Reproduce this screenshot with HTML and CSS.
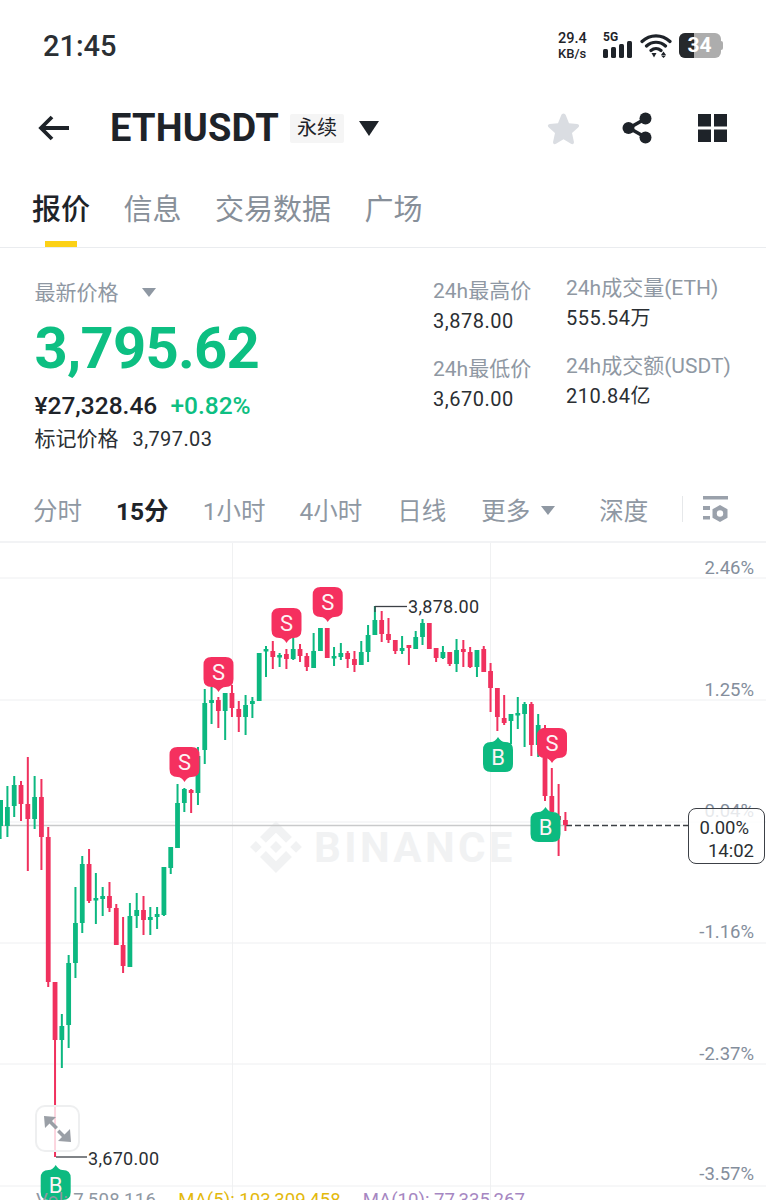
FILE: index.html
```html
<!DOCTYPE html>
<html>
<head>
    <meta charset="UTF-8">
    <title>ETHUSDT 永续</title>
    <link rel="stylesheet" href="styles.css">
</head>
<body>
    <div class="statusbar">
        <span class="clock">21:45</span>
        <div class="status-icons">
            <div class="netspeed"><span>29.4</span><span class="unit">KB/s</span></div>
            <div class="signal">
                <span class="five-g">5G</span>
                <svg width="29" height="17" viewBox="0 0 29 17"><rect x="0" y="8" width="5" height="9" rx="1.5"/><rect x="8" y="6" width="5" height="11" rx="1.5"/><rect x="16" y="3" width="5" height="14" rx="1.5"/><rect x="24" y="0" width="5" height="17" rx="1.5"/></svg>
            </div>
            <svg class="wifi" width="32" height="25" viewBox="0 0 32 25"><path d="M2 8.5C10 1 22 1 30 8.5M6.5 13C12 8 20 8 25.5 13M11 17.5C14 15 18 15 21 17.5" fill="none" stroke="#1e2329" stroke-width="3.2" stroke-linecap="round"/><path d="M11.5 20h5l-2.500 4.500zM21 22h5l-2.500-3.500zM21 22.500h5l-2.500 2.500z" fill="#1e2329"/></svg>
            <div class="battery"><span class="battery-level"></span><span class="battery-text">34</span></div>
        </div>
    </div>

    <div class="topbar">
        <svg class="back" width="32" height="26" viewBox="0 0 32 26"><path d="M31 13H3M14 2 3 13l11 11" fill="none" stroke="#1e2329" stroke-width="3.800"/></svg>
        <span class="symbol">ETHUSDT</span>
        <span class="chip">永续</span>
        <span class="tri tri-big"></span>
        <div class="topbar-actions">
            <svg width="33" height="33" viewBox="0 0 33 33"><path d="M16.500 1.500c1 0 1.800.700 2.300 1.800l3.200 8 8.200.700c2 .2 2.600 2 1.200 3.300l-6.400 5.800 1.900 8.700c.4 2-1.200 3-2.900 2l-7.500-4.500-7.500 4.500c-1.700 1-3.300 0-2.900-2l1.900-8.700L1.600 15.300C.2 14 .8 12.200 2.800 12l8.200-.7 3.200-8c.5-1.100 1.300-1.800 2.300-1.800z" fill="#dadde2"/></svg>
            <svg width="30" height="32" viewBox="0 0 30 32"><path d="M23 7 7 16l16 9" fill="none" stroke="#1e2329" stroke-width="3.500"/><circle cx="23.500" cy="6.500" r="6" fill="#1e2329"/><circle cx="6.500" cy="16" r="6" fill="#1e2329"/><circle cx="23.500" cy="25.500" r="6" fill="#1e2329"/></svg>
            <svg class="layout-icon" width="29" height="28" viewBox="0 0 29 28" fill="#1e2329"><rect width="13" height="12.500"/><rect x="16" width="13" height="12.500"/><rect y="15.500" width="13" height="12.500"/><rect x="16" y="15.500" width="13" height="12.500"/></svg>
        </div>
    </div>

    <div class="tabs">
        <div class="tab active">报价<i class="tab-mark"></i></div>
        <div class="tab">信息</div>
        <div class="tab">交易数据</div>
        <div class="tab">广场</div>
    </div>

    <div class="stats">
        <div class="price-block">
            <div class="price-label">最新价格 <span class="tri tri-small"></span></div>
            <div class="price">3,795.62</div>
            <div class="cny">¥27,328.46 <span class="change">+0.82%</span></div>
            <div class="mark"><span>标记价格</span><span class="mark-value">3,797.03</span></div>
        </div>
        <div class="stat-col stat-col-a">
            <div class="stat"><div class="stat-label">24h最高价</div><div class="stat-value">3,878.00</div></div>
            <div class="stat"><div class="stat-label">24h最低价</div><div class="stat-value">3,670.00</div></div>
        </div>
        <div class="stat-col stat-col-b">
            <div class="stat"><div class="stat-label">24h成交量(ETH)</div><div class="stat-value">555.54万</div></div>
            <div class="stat"><div class="stat-label">24h成交额(USDT)</div><div class="stat-value">210.84亿</div></div>
        </div>
    </div>

    <div class="intervals">
        <span>分时</span>
        <span class="current">15分</span>
        <span>1小时</span>
        <span>4小时</span>
        <span class="daily">日线</span>
        <span class="more">更多<i class="tri tri-small"></i></span>
        <span class="depth">深度</span>
        <i class="divider"></i>
        <svg class="chart-settings" width="25" height="26" viewBox="0 0 25 26" fill="#9aa1ab"><rect width="25" height="3.500"/><rect y="10" width="7" height="4"/><rect y="20" width="7" height="3.500"/><path d="M17 9l7.500 4.200v8.600L17 26l-7.500-4.200v-8.600z"/><circle cx="17" cy="17.500" r="3.200" fill="#fff"/></svg>
    </div>

    <div class="chart">
        <svg id="chart" width="766" height="657" viewBox="0 543 766 657"></svg>
        <div class="last-tag"><span>0.00%</span><span class="countdown">14:02</span></div>
        <div class="expand">
            <svg width="45" height="47" viewBox="0 0 45 47"><path d="M9 11l12 1-4 4 6 6-2.500 2.500-6-6-4.500 4.500z" fill="#9a9fa6"/><path d="M36 37l-13-1 4-4-5-5 2.500-2.500 5 5 5.500-5.500z" fill="#9a9fa6"/></svg>
        </div>
        <div class="legend">
            <span class="legend-vol">Vol: 7,508,116</span>
            <span class="legend-ma5">MA(5): 103,309,458</span>
            <span class="legend-ma10">MA(10): 77,335,267</span>
        </div>
    </div>

    <script src="chart.js"></script>
</body>
</html>
```

FILE: styles.css
```css
* { box-sizing: border-box; }
html, body { margin: 0; padding: 0; }
body { width: 766px; height: 1200px; overflow: hidden; background: #fff; color: #1e2329; font-family: Roboto, "Noto Sans CJK SC", sans-serif; }

.tri { display: inline-block; width: 0; height: 0; border-style: solid; border-color: #1e2329 transparent transparent transparent; }
.tri-big { border-width: 15px 10.500px 0 10.500px; margin-left: 15px; }
.tri-small { border-width: 9px 7.500px 0 7.500px; border-top-color: #8f98a3; }

.statusbar { height: 90px; padding-left: 43px; padding-right: 43px; display: flex; align-items: center; justify-content: space-between; }
.clock { margin-top: 2px; font-size: 29px; font-weight: 500; color: #2b2f33; }
.status-icons { display: flex; align-items: flex-end; height: 25px; }
.netspeed { display: flex; flex-direction: column; width: 45px; margin-bottom: -3px; font-size: 14.500px; font-weight: 500; line-height: 16px; }
.netspeed .unit { font-size: 13px; line-height: 14px; }
.signal { position: relative; width: 29px; height: 17px; }
.signal svg { display: block; fill: #1e2329; }
.five-g { position: absolute; left: 0; top: -10px; font-size: 12px; font-weight: 700; line-height: 12px; }
.wifi { margin-left: 8px; }
.battery { position: relative; width: 42px; height: 25px; margin-left: 7px; margin-right: 2px; border-radius: 6px; background: #adadad; text-align: center; }
.battery::after { content: ""; position: absolute; right: -2px; top: 8px; width: 2px; height: 9px; border-radius: 0 2px 2px 0; background: #adadad; }
.battery-level { position: absolute; left: 0; top: 0; width: 15px; height: 100%; border-radius: 6px 0 0 6px; background: #26292c; }
.battery-text { position: relative; font-size: 21px; font-weight: 700; line-height: 25px; color: #fff; margin-right: 1px; }

.topbar { height: 76px; padding-left: 38px; padding-right: 39px; display: flex; align-items: center; }
.symbol { margin-left: 40px; font-size: 38px; font-weight: 700; letter-spacing: 0.2px; }
.chip { margin-left: 11px; width: 54px; height: 29px; background: #f5f5f5; border-radius: 2px; font-size: 20px; line-height: 29px; text-align: center; }
.topbar-actions { margin-left: auto; display: flex; align-items: center; gap: 42px; }
.layout-icon { margin-left: 4px; }

.tabs { position: relative; height: 82px; padding-left: 32px; padding-top: 24px; display: flex; gap: 33.500px; border-bottom: 1px solid #eaecef; }
.tab { position: relative; height: 40px; font-size: 29px; line-height: 40px; color: #878f99; }
.tab.active { color: #1e2329; font-weight: 500; }
.tab-mark { position: absolute; left: 13px; top: 51px; width: 32px; height: 6px; background: #fcd116; }

.stats { height: 232px; display: flex; }
.price-block { width: 433px; padding-left: 34.500px; padding-top: 30px; }
.price-label { font-size: 21px; line-height: 30px; color: #8f98a3; }
.price-label .tri { margin-left: 18px; vertical-align: 3px; }
.price { margin-top: 8px; font-size: 58px; font-weight: 700; line-height: 64px; letter-spacing: -0.8px; color: #0dbf82; }
.cny { margin-top: 11px; font-size: 24.500px; font-weight: 500; line-height: 30px; white-space: nowrap; }
.change { margin-left: 7px; color: #0dbf82; }
.mark { margin-top: 5px; font-size: 21px; line-height: 26px; color: #2b2f33; }
.mark-value { margin-left: 14px; font-size: 20px; letter-spacing: 0.4px; }
.stat-col { display: flex; flex-direction: column; gap: 21px; }
.stat-col-a { width: 133px; padding-top: 29px; }
.stat-col-b { padding-top: 26px; }
.stat-label { font-size: 21px; line-height: 28px; color: #8f98a3; white-space: nowrap; }
.stat-value { margin-top: 3px; font-size: 20px; line-height: 26px; letter-spacing: 0.5px; color: #2b2f33; white-space: nowrap; }

.intervals { position: relative; height: 63px; padding-left: 33px; padding-bottom: 3px; display: flex; align-items: center; gap: 34px; font-size: 24.500px; color: #8f98a3; border-bottom: 2px solid #f2f3f5; }
.intervals .current { color: #1e2329; font-weight: 700; }
.intervals .daily { margin-left: 1px; }
.more { margin-left: 1px; }
.more .tri { margin-left: 11px; vertical-align: 5px; }
.depth { margin-left: 10px; }
.divider { width: 1px; height: 26px; background: #e6e8ea; }
.chart-settings { margin-left: -14px; }

.chart { position: relative; height: 657px; overflow: hidden; }
.chart svg { display: block; }
.last-tag { position: absolute; left: 688px; top: 265px; width: 77px; height: 56px; padding: 8px 10px 0 0; display: flex; flex-direction: column; align-items: flex-end; border: 1.500px solid #3c4046; border-radius: 8px; background: rgba(255, 255, 255, 0.8); font-size: 18.500px; line-height: 23px; color: #2b2f33; }
.last-tag span:first-child { margin-right: 5px; }
.expand { position: absolute; left: 35px; top: 562px; width: 45px; height: 47px; border: 2px solid #eeeff0; border-radius: 10px; background: rgba(255, 255, 255, 0.8); }
.expand svg { margin: -2px; }
.legend { position: absolute; left: 36px; top: 646px; display: flex; gap: 22px; font-size: 18.600px; line-height: 22px; white-space: nowrap; }
.legend-vol { color: #8f98a3; letter-spacing: 0.3px; }
.legend-ma5 { color: #e3b90d; }
.legend-ma10 { color: #a687c2; }
```

FILE: chart.js
```js
// свечи: [цвет, high, верх тела, низ тела, low], шаг по x постоянный
var candles = [
    ['g',800,800,826,839],['g',786,807,826,837],['g',776,785,806,817],['r',781,785,804,821],
    ['r',757,804,819,871],['g',776,797,819,829],['r',779,797,837,870],['r',827,837,982,987],
    ['r',982,982,1040,1157],['g',1014,1026,1040,1068],['g',955,963,1025,1048],['g',887,923,963,978],
    ['g',856,864,923,933],['r',849,864,901,903],['g',873,898,900,924],['g',887,896,899,916],
    ['r',882,896,908,912],['r',904,908,945,945],['r',917,945,966,973],['g',903,916,967,967],
    ['g',893,910,916,928],['r',896,910,920,935],['g',907,917,920,935],['g',907,914,917,929],
    ['g',867,867,915,916],['g',847,847,868,874],['g',784,803,848,848],['g',788,789,803,812],
    ['r',789,790,793,813],['g',747,756,793,805],['g',689,703,750,764],['g',687,700,703,724],
    ['r',697,700,711,728],['g',693,693,711,740],['r',685,693,708,717],['r',701,709,717,732],
    ['g',695,705,717,735],['g',697,701,704,718],['g',653,653,701,701],['g',646,649,651,677],
    ['r',641,651,657,669],['g',653,655,657,667],['r',649,654,659,669],['g',637,649,659,660],
    ['r',644,649,656,662],['r',653,656,667,671],['g',633,651,668,668],['g',628,628,651,651],
    ['r',628,628,658,658],['g',647,656,658,666],['g',643,653,657,660],['r',651,653,659,668],
    ['r',651,659,665,672],['g',641,652,665,665],['g',625,635,652,662],['g',606,620,635,635],
    ['r',611,620,634,642],['r',618,634,640,643],['r',640,640,651,654],['g',636,648,651,654],
    ['r',645,645,648,665],['g',631,637,649,649],['g',619,623,637,645],['r',623,623,649,649],
    ['r',648,648,658,662],['g',646,652,658,659],['r',652,652,664,666],['g',639,650,664,672],
    ['r',640,649,652,667],['r',647,652,667,668],['g',650,650,667,677],['r',646,649,672,672],
    ['r',663,671,688,712],['r',688,688,717,731],['r',695,718,723,725],['g',714,714,721,744],
    ['g',697,713,715,729],['g',702,704,714,747],['r',702,704,745,756],['g',714,725,745,757],
    ['r',725,728,796,801],['r',768,796,812,820],['r',784,816,820,856],['r',812,820,825,831]
];
var COLORS = { g: '#0cb880', r: '#f0315e' };
var STEP = 6.805, X0 = 0.6;
var SVG = 'http://www.w3.org/2000/svg';
var svg = document.getElementById('chart');

function add(tag, attrs, text) {
    var el = document.createElementNS(SVG, tag);
    for (var k in attrs) el.setAttribute(k, attrs[k]);
    if (text) el.textContent = text;
    svg.appendChild(el);
    return el;
}

function line(x1, y1, x2, y2, color, width, dash) {
    var attrs = { x1: x1, y1: y1, x2: x2, y2: y2, stroke: color, 'stroke-width': width || 1 };
    if (dash) attrs['stroke-dasharray'] = dash;
    add('line', attrs);
}

// сетка и подписи оси
[232.5, 490.5].forEach(function (x) { line(x, 543, x, 1200, '#f0f1f2'); });
var scale = [
    [568, 578, '2.46%'], [690, 700, '1.25%'], [811, 822, '0.04%'],
    [932, 943, '-1.16%'], [1054, 1064, '-2.37%'], [1174, 1186, '-3.57%']
];
scale.forEach(function (s) {
    line(0, s[1], 766, s[1], '#eeeff1');
    add('text', { x: 754, y: s[0], dy: '0.35em', 'text-anchor': 'end', fill: '#848e9c', 'font-size': 18.5 }, s[2]);
});

// водяной знак
var mark = add('g', { transform: 'translate(250 821) scale(0.41)', fill: '#f1f2f3' });
var markPath = document.createElementNS(SVG, 'path');
markPath.setAttribute('d', 'M38.73 53.2l24.59-24.58 24.6 24.6 14.3-14.31L63.32 0 24.43 38.9zM0 63.31l14.3-14.31 14.31 14.31-14.31 14.3zM38.73 73.41l24.59 24.59 24.6-24.6 14.31 14.29-38.9 38.91-38.91-38.88-.02-.02zM98 63.31l14.3-14.31 14.31 14.3-14.31 14.32zM77.83 63.3L63.32 48.78 52.59 59.51l-1.24 1.23-2.54 2.54 14.51 14.5 14.51-14.47z');
mark.appendChild(markPath);
add('text', { x: 314, y: 862, fill: '#f1f2f3', 'font-size': 42, 'font-weight': 700, 'letter-spacing': 3.4 }, 'BINANCE');

line(0, 825.5, 566, 825.5, '#c9cacb', 1.5);
line(566, 825.5, 688, 825.5, '#3c4046', 1.5, '6 3');

candles.forEach(function (c, i) {
    var x = X0 + STEP * i;
    var color = COLORS[c[0]];
    add('rect', { x: x - 1, y: c[1], width: 2, height: c[4] - c[1], fill: color });
    add('rect', { x: x - 2.4, y: c[2], width: 4.8, height: Math.max(c[3] - c[2], 2.5), fill: color });
});

// отметки макс/мин
line(375, 606.5, 407, 606.5, '#3c4046', 1.3);
line(375, 606, 375, 612, '#3c4046', 1.3);
add('text', { x: 408, y: 607, dy: '0.35em', fill: '#2b2f33', 'font-size': 18, 'letter-spacing': 0.3 }, '3,878.00');
line(56, 1157, 87, 1157, '#3c4046', 1.3);
add('text', { x: 88, y: 1159, dy: '0.35em', fill: '#2b2f33', 'font-size': 18, 'letter-spacing': 0.3 }, '3,670.00');

function badge(cx, top, letter) {
    var h = 15, s = 30, r = 8;
    var sell = letter === 'S';
    var left = cx - h, right = cx + h, bottom = top + s;
    var d = 'M' + (left + r) + ' ' + top;
    if (!sell) d += 'L' + (cx - 7) + ' ' + top + 'Q' + (cx - 3) + ' ' + top + ' ' + cx + ' ' + (top - 5) + 'Q' + (cx + 3) + ' ' + top + ' ' + (cx + 7) + ' ' + top;
    d += 'L' + (right - r) + ' ' + top + 'Q' + right + ' ' + top + ' ' + right + ' ' + (top + r);
    d += 'L' + right + ' ' + (bottom - r) + 'Q' + right + ' ' + bottom + ' ' + (right - r) + ' ' + bottom;
    if (sell) d += 'L' + (cx + 7) + ' ' + bottom + 'Q' + (cx + 3) + ' ' + bottom + ' ' + cx + ' ' + (bottom + 5) + 'Q' + (cx - 3) + ' ' + bottom + ' ' + (cx - 7) + ' ' + bottom;
    d += 'L' + (left + r) + ' ' + bottom + 'Q' + left + ' ' + bottom + ' ' + left + ' ' + (bottom - r);
    d += 'L' + left + ' ' + (top + r) + 'Q' + left + ' ' + top + ' ' + (left + r) + ' ' + top + 'Z';
    add('path', { d: d, fill: sell ? '#f5305f' : '#0cba80' });
    add('text', { x: cx, y: top + s / 2, dy: '0.36em', 'text-anchor': 'middle', fill: '#fdf3f5', 'font-size': 22 }, letter);
}

badge(184.5, 747, 'S');
badge(218.5, 657, 'S');
badge(286.5, 608, 'S');
badge(327.7, 587, 'S');
badge(498, 742, 'B');
badge(552, 728, 'S');
badge(545.5, 812, 'B');
badge(55.7, 1170, 'B');
```
